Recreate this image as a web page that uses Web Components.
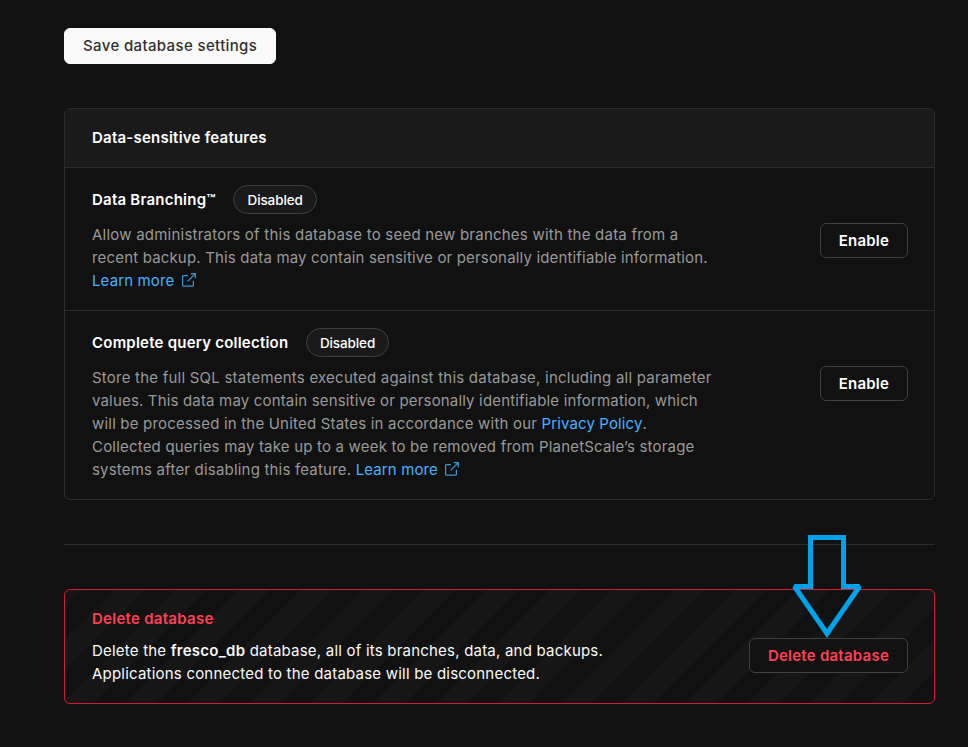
<!DOCTYPE html>
<html lang="en">
<head>
<meta charset="utf-8">
<title>Database settings</title>
<style>
html,body{margin:0;background:#111}
body{font:400 15px/23px Inter,"Liberation Sans",sans-serif;color:#fafafa;letter-spacing:.21px;height:747px;overflow:hidden;position:relative}
</style>
</head>
<body>
<settings-page></settings-page>
<script>
const define=(name,html)=>customElements.define(name,class extends HTMLElement{
  constructor(){
    super();
    const t=document.createElement('template');
    t.innerHTML=html;
    this.attachShadow({mode:'open'}).append(t.content.cloneNode(true));
  }
});

define('ui-button',`<style>
:host{display:inline-flex;flex:none}
button{all:unset;box-sizing:border-box;height:35px;padding:0 18px;border:1px solid #404040;border-radius:6px;background:#111;color:#fff;font-weight:600;line-height:34px;white-space:nowrap;cursor:pointer}
:host([kind=primary]) button{height:36px;border-color:#fafafa;background:#fafafa;color:#303030;font-weight:500;line-height:34px;letter-spacing:.36px}
:host([kind=danger]) button{color:#ff4053;letter-spacing:.24px}
</style><button><slot></slot></button>`);

define('status-badge',`<style>
:host{display:inline-block;box-sizing:border-box;height:29px;padding:0 13.2px;border:1px solid #404040;border-radius:15px;background:#1a1a1a;font-size:13.5px;font-weight:500;line-height:28px;letter-spacing:-.11px}
</style><slot></slot>`);

define('ext-link',`<style>
:host{color:#47b2ff;white-space:nowrap;letter-spacing:.13px}
svg{width:14px;height:14px;margin-left:7.4px;vertical-align:-1px;fill:none;stroke:#3b97d6;stroke-width:1.25}
:host([plain]) svg{display:none}
</style><slot></slot><svg viewBox="0 0 14 14"><path d="M6 2.6H1.6Q.6 2.6.6 3.6V12.2Q.6 13.2 1.6 13.2H10.4Q11.4 13.2 11.4 12.2V7.8M8.8.7H13.3V5.2M13.1.9L5.6 8.4"/></svg>`);

define('text-line',`<style>
:host{display:block;white-space:nowrap;letter-spacing:.195px}
:host([fit=loose]){letter-spacing:.225px}
:host([fit=tight]){letter-spacing:.17px}
</style><slot></slot>`);

define('feature-row',`<style>
:host{display:flex;align-items:flex-start;justify-content:space-between;padding:17px 26px 18px 27px;border-top:1px solid #2b2b2b}
.head{display:flex;align-items:center;height:29px;margin-bottom:9px;color:#fff;font-weight:600;gap:17.4px;letter-spacing:.225px}
.copy{color:#999}
::slotted(ui-button){margin-top:38px}
</style><div><div class="head"><slot name="title"></slot><slot name="badge"></slot></div><div class="copy"><slot></slot></div></div><slot name="action"></slot>`);

define('feature-card',`<style>
:host{display:block;border:1px solid #2b2b2b;border-radius:6px;overflow:hidden}
header{height:58px;padding-left:27px;background:#1a1a1a;color:#fff;font-weight:600;line-height:58px;letter-spacing:.225px}
</style><header><slot name="heading"></slot></header><slot></slot>`);

define('danger-panel',`<style>
:host{box-sizing:border-box;display:flex;align-items:flex-start;justify-content:space-between;height:115px;padding:17px 26px 0 27px;border:1px solid #d41b34;border-radius:6px;background:repeating-linear-gradient(-45deg,#111 0 22px,#161616 22px 44px) padding-box}
.title{color:#ff4053;font-weight:600;margin-bottom:9px;letter-spacing:.27px}
::slotted(ui-button){margin-top:31px}
</style><div><div class="title"><slot name="title"></slot></div><div><slot></slot></div></div><slot name="action"></slot>`);

define('pointer-arrow',`<style>
:host{position:absolute;left:790px;top:532px;width:74px;height:108px;pointer-events:none}
svg{display:block}
</style><svg width="74" height="108" viewBox="790 532 74 108"><path d="M810.5 537.5H843.5V586.5H859.5L827 633.5 794.5 586.5H810.5Z" fill="none" stroke="#00a2e8" stroke-width="5" stroke-miterlimit="2"/></svg>`);

define('settings-page',`<style>
:host{display:block;padding:28px 33px 0 64px}
.save{display:flex;height:36px;margin-bottom:44px}
hr{height:1px;margin:44px 0;border:0;background:#2b2b2b}
b{font-weight:600;letter-spacing:.26px}
</style>
<div class="save"><ui-button kind="primary">Save database settings</ui-button></div>
<feature-card>
<span slot="heading">Data-sensitive features</span>
<feature-row><span slot="title">Data Branching™</span><status-badge slot="badge">Disabled</status-badge><text-line fit="loose">Allow administrators of this database to seed new branches with the data from a</text-line><text-line fit="tight">recent backup. This data may contain sensitive or personally identifiable information.</text-line><text-line><ext-link>Learn more</ext-link></text-line><ui-button slot="action">Enable</ui-button></feature-row>
<feature-row><span slot="title">Complete query collection</span><status-badge slot="badge">Disabled</status-badge><text-line fit="loose">Store the full SQL statements executed against this database, including all parameter</text-line><text-line fit="tight">values. This data may contain sensitive or personally identifiable information, which</text-line><text-line>will be processed in the United States in accordance with our <ext-link plain>Privacy Policy</ext-link>.</text-line><text-line>Collected queries may take up to a week to be removed from PlanetScale’s storage</text-line><text-line>systems after disabling this feature. <ext-link>Learn more</ext-link></text-line><ui-button slot="action">Enable</ui-button></feature-row>
</feature-card>
<hr>
<danger-panel><span slot="title">Delete database</span>Delete the <b>fresco_db</b> database, all of its branches, data, and backups.<br>Applications connected to the database will be disconnected.<ui-button slot="action" kind="danger">Delete database</ui-button></danger-panel>
<pointer-arrow></pointer-arrow>`);
</script>
</body>
</html>
